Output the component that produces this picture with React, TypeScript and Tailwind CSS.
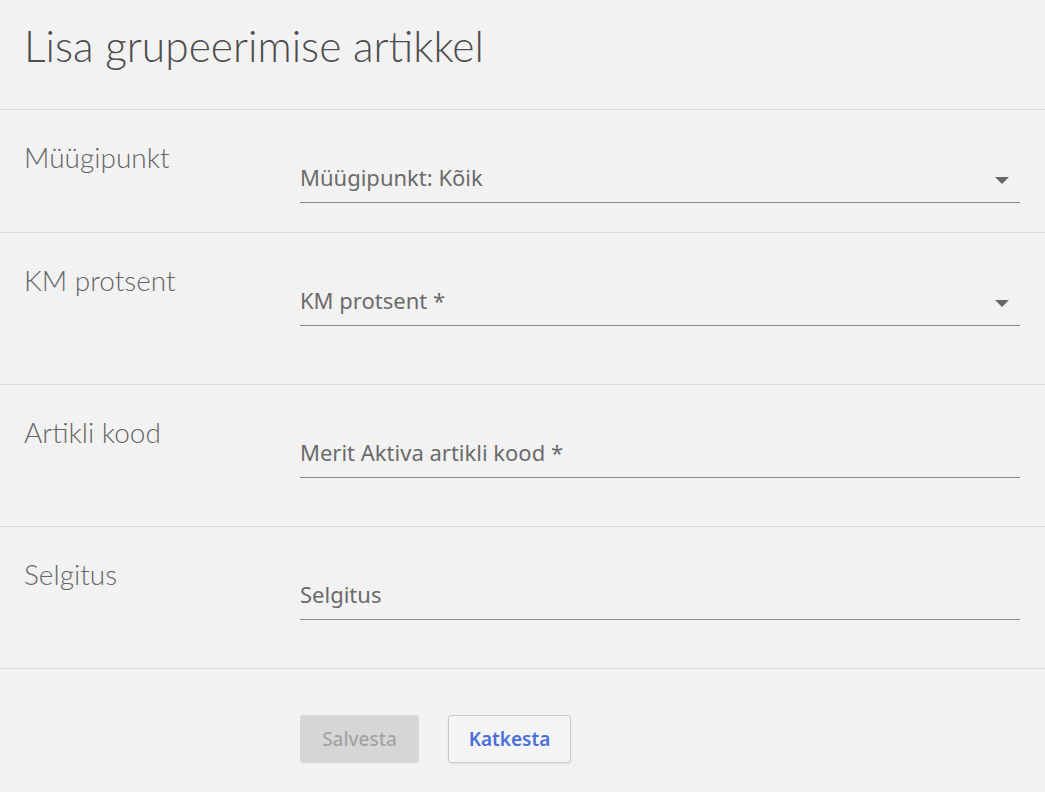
import { useState } from "react";

type Field = {
  label: string;
  placeholder: string;
  select?: boolean;
  height: string;
};

const fields: Field[] = [
  { label: "Müügipunkt", placeholder: "Müügipunkt: Kõik", select: true, height: "h-[123px]" },
  { label: "KM protsent", placeholder: "KM protsent *", select: true, height: "h-[152px]" },
  { label: "Artikli kood", placeholder: "Merit Aktiva artikli kood *", height: "h-[142px]" },
  { label: "Selgitus", placeholder: "Selgitus", height: "h-[142px]" },
];

function Caret() {
  return (
    <svg width="14" height="7" viewBox="0 0 14 7" className="shrink-0">
      <path d="M0 0 L14 0 L7 7 Z" fill="#666666" />
    </svg>
  );
}

function FormRow({ field }: { field: Field }) {
  const [value, setValue] = useState("");
  return (
    <div className={`flex border-b border-[#d9d9d9] ${field.height}`}>
      {/* Label column */}
      <div className="w-[300px] shrink-0 pl-6 pt-[30px]">
        <span className="font-['Lato',sans-serif] font-light text-[28px] leading-[34px] text-[#666666]">
          {field.label}
        </span>
      </div>

      {/* Input column */}
      <div className="flex-1 mr-[25px] pt-[52px]">
        <div className="flex items-start border-b border-[#8a8a8a] pb-[10px]">
          <input
            value={value}
            onChange={(e) => setValue(e.target.value)}
            placeholder={field.placeholder}
            className="flex-1 min-w-0 h-[30px] leading-[30px] bg-transparent outline-none font-['Noto_Sans',sans-serif] text-[22px] text-[#666666] placeholder:text-[#6b6b6b]"
          />
          {field.select && (
            <div className="pr-[11px] pt-[15px]">
              <Caret />
            </div>
          )}
        </div>
      </div>
    </div>
  );
}

export default function App() {
  return (
    <div className="min-h-[792px] w-full bg-[#f2f2f2]">
      {/* Header */}
      <div className="h-[110px] border-b border-[#d9d9d9] pl-6 pt-[22px]">
        <h1 className="font-['Lato',sans-serif] font-light text-[42.5px] leading-[48px] text-[#4d4d4d]">
          Lisa grupeerimise artikkel
        </h1>
      </div>

      {fields.map((f) => (
        <FormRow key={f.label} field={f} />
      ))}

      {/* Actions */}
      <div className="flex gap-[29px] pl-[300px] pt-[46px]">
        <button
          disabled
          className="h-[48px] w-[119px] rounded-[3px] bg-[#d6d6d6] font-['Noto_Sans',sans-serif] text-[19px] font-medium text-[#a3a3a3]"
        >
          Salvesta
        </button>
        <button className="h-[48px] w-[123px] rounded-[3px] border border-[#c9c9c9] bg-[#f4f4f4] font-['Noto_Sans',sans-serif] text-[19px] font-semibold text-[#4a70d9] shadow-[0_2px_3px_rgba(0,0,0,0.06)]">
          Katkesta
        </button>
      </div>
    </div>
  );
}
